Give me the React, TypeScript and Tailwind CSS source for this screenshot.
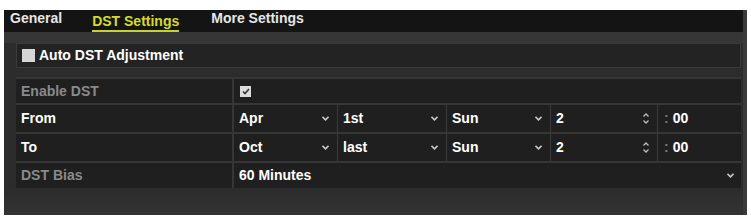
import React from "react";

const Chevron = () => (
  <svg width="7" height="5" viewBox="0 0 7 5" className="shrink-0">
    <path d="M0.5 0.8 L3.5 3.8 L6.5 0.8" fill="none" stroke="#c8c8c8" strokeWidth="1.6" />
  </svg>
);

const Spinner = () => (
  <svg width="6" height="11" viewBox="0 0 6 11" className="shrink-0">
    <path d="M0.5 3.5 L3 1 L5.5 3.5" fill="none" stroke="#bdbdbd" strokeWidth="1.3" />
    <path d="M0.5 7.5 L3 10 L5.5 7.5" fill="none" stroke="#bdbdbd" strokeWidth="1.3" />
  </svg>
);

function Select({ text, w }: { text: string; w: string }) {
  return (
    <div className={`${w} h-full flex items-center justify-between pl-[5px] pr-[8px] border-r border-[#3a3a3a]`}>
      <span className="text-white">{text}</span>
      <Chevron />
    </div>
  );
}

function TimeRow({ label, m, o, d }: { label: string; m: string; o: string; d: string }) {
  return (
    <div className="flex h-[29px] border-b-2 border-[#363636]">
      <div className="w-[218px] flex items-center pl-[5px] text-white border-r-2 border-[#363636]">{label}</div>
      <div className="flex-1 flex items-center">
        <Select text={m} w="w-[104px]" />
        <Select text={o} w="w-[109px]" />
        <Select text={d} w="w-[104px]" />
        <div className="w-[107px] h-full flex items-center justify-between pl-[5px] pr-[8px] border-r border-[#3a3a3a]">
          <span className="text-white">2</span>
          <Spinner />
        </div>
        <div className="flex-1 h-full flex items-center pl-[6px]">
          <span className="text-[#7a7a7a] mr-[4px]">:</span>
          <span className="text-white">00</span>
        </div>
      </div>
    </div>
  );
}

export default function App() {
  return (
    <div className="w-[751px] h-[218px] bg-white pt-[10px] pl-[4px] pr-[4px]" style={{ fontFamily: '"Liberation Sans", Arial, sans-serif' }}>
      <div className="h-[205px] bg-[#2c2c2c] flex flex-col border-r-[4px] border-[#3a3a3a] font-bold text-[14px]">
        <div className="h-[22px] bg-[#141414] flex items-end pl-[6px] text-[14px]">
          <span className="text-[#e6e6e6] pb-[3px]">General</span>
          <span className="ml-[30px] text-[#d4dc2a] border-b-2 border-[#c9d22a] pb-[1px] leading-[16px]">DST Settings</span>
          <span className="ml-[32px] text-[#e6e6e6] pb-[3px]">More Settings</span>
        </div>
        <div className="h-[11px] bg-[#363636]" />
        <div className="flex flex-col pl-[12px] pr-[2px]">
          <div className="h-[25px] bg-[#232323] border border-[#3a3a3a] flex items-center pl-[5px]">
            <div className="w-[13px] h-[13px] bg-[#d6d6d6] mr-[4px]" />
            <span className="text-white">Auto DST Adjustment</span>
          </div>
          <div className="h-[9px]" />
          <div className="bg-[#1f1f1f] border-t-2 border-[#363636]">
            <div className="flex h-[26px] border-b-2 border-[#363636]">
              <div className="w-[218px] flex items-center pl-[5px] text-[#8a8a8a] border-r-2 border-[#363636]">Enable DST</div>
              <div className="flex-1 flex items-center pl-[6px]">
                <div className="w-[11px] h-[11px] bg-[#dcdcdc] flex items-center justify-center">
                  <svg width="8" height="7" viewBox="0 0 8 7">
                    <path d="M1 3.5 L3 5.5 L7 1" fill="none" stroke="#333" strokeWidth="1.6" />
                  </svg>
                </div>
              </div>
            </div>
            <TimeRow label="From" m="Apr" o="1st" d="Sun" />
            <TimeRow label="To" m="Oct" o="last" d="Sun" />
            <div className="flex h-[25px]">
              <div className="w-[218px] flex items-center pl-[5px] text-[#8a8a8a] border-r-2 border-[#363636]">DST Bias</div>
              <div className="flex-1 flex items-center justify-between pl-[5px] pr-[7px]">
                <span className="text-white">60 Minutes</span>
                <Chevron />
              </div>
            </div>
          </div>
        </div>
        <div className="flex-1 bg-gradient-to-b from-[#2c2c2c] to-[#333333]" />
      </div>
    </div>
  );
}
